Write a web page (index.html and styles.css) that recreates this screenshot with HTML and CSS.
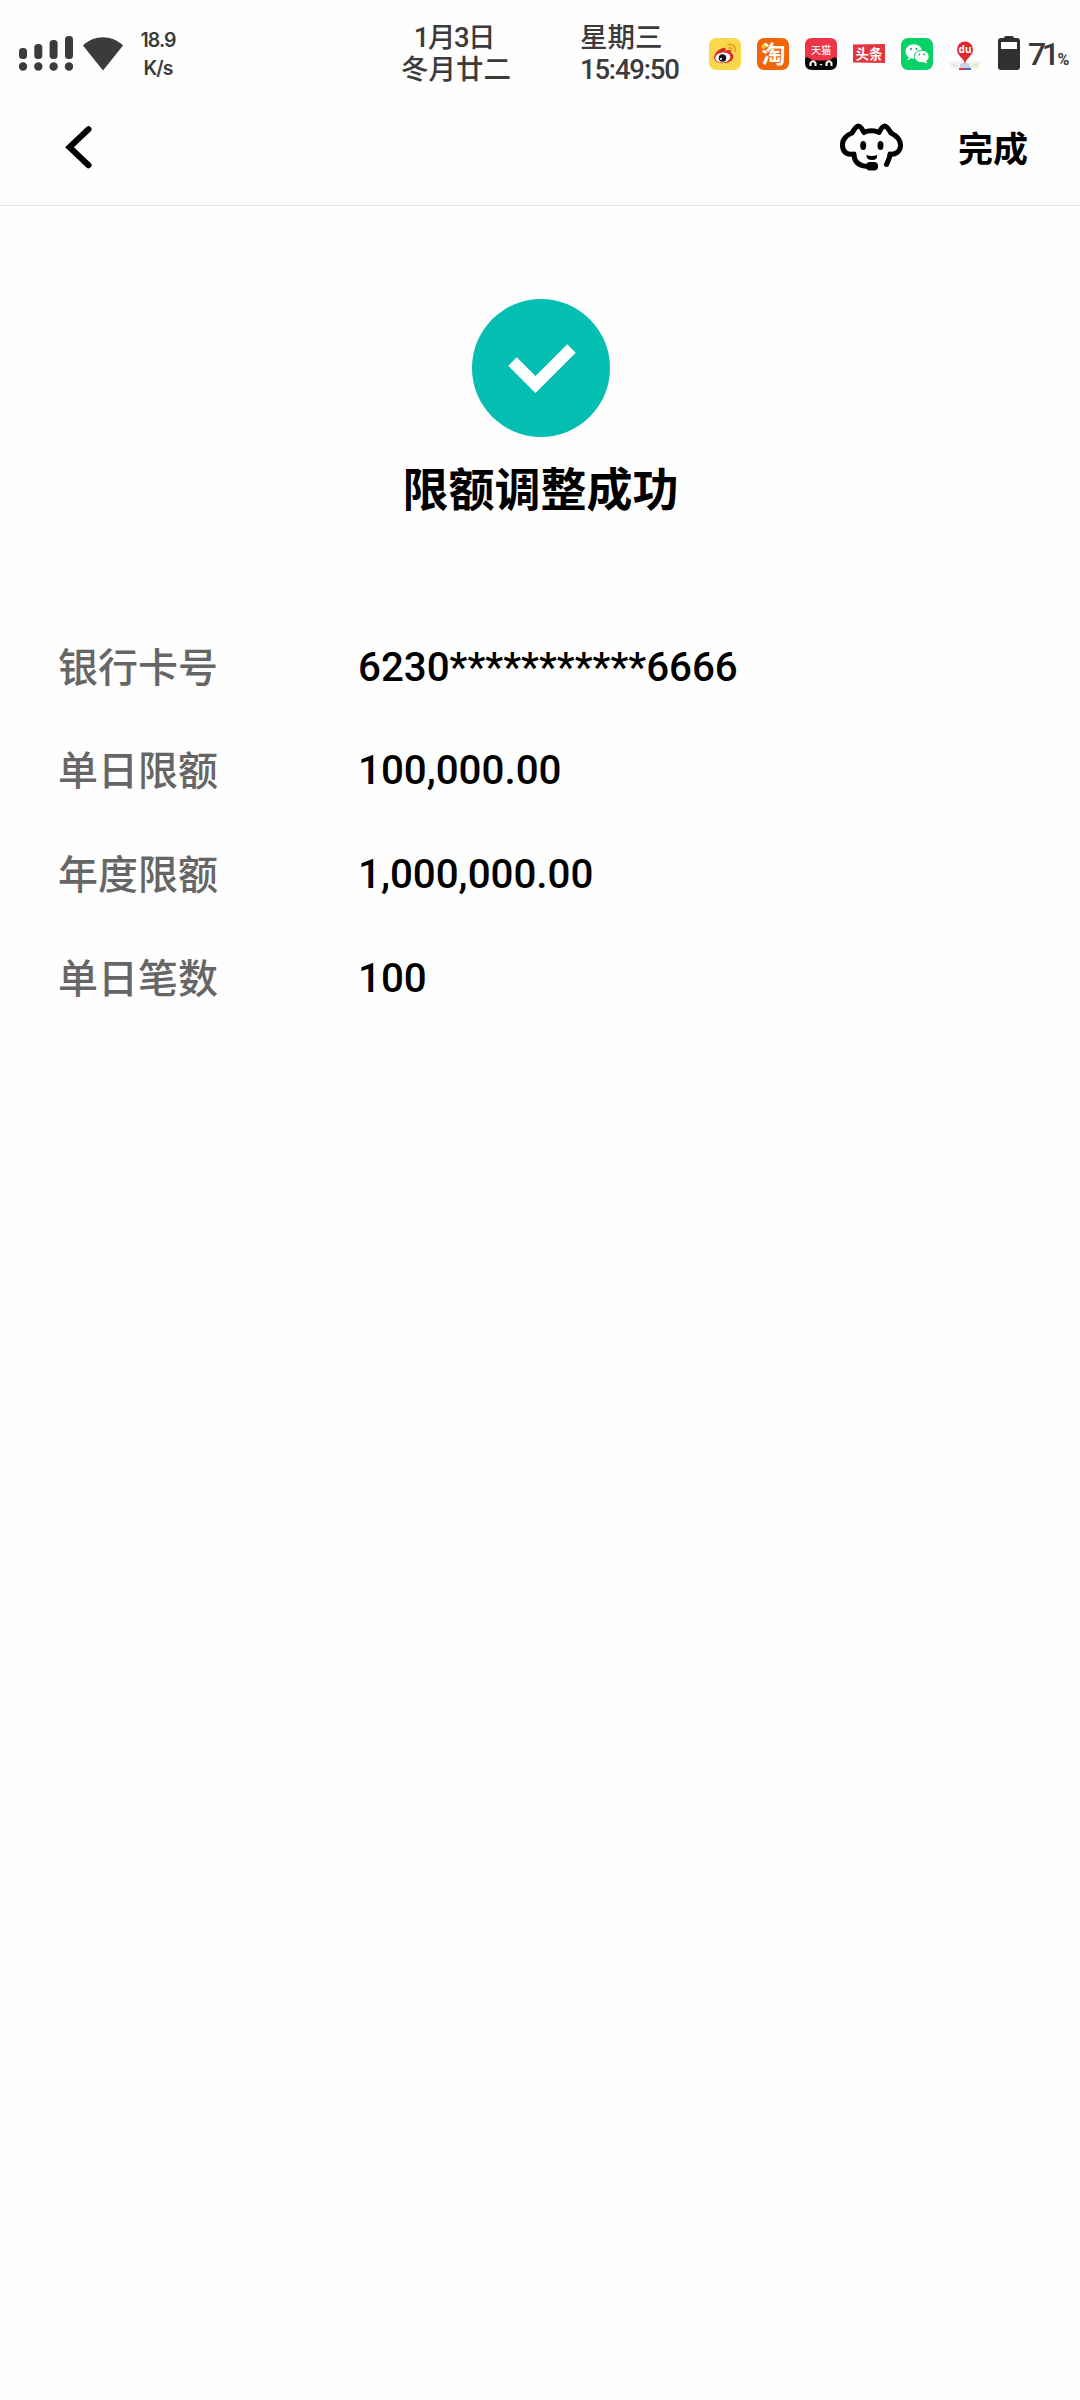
FILE: index.html
```html
<!DOCTYPE html>
<html lang="zh-CN">
<head>
<meta charset="utf-8">
<title>限额调整成功</title>
<link rel="stylesheet" href="styles.css">
</head>
<body>
<header class="status">
  <svg class="signal" width="54" height="36" viewBox="0 0 54 36">
    <rect x="0" y="12" width="8" height="11" rx="3.5"/><rect x="15.300" y="8" width="8" height="15" rx="3.500"/><rect x="30.600" y="4" width="8" height="19" rx="3.500"/><rect x="46" y="0" width="8" height="23" rx="3.500"/>
    <circle cx="4" cy="30.500" r="4.200"/><circle cx="19.300" cy="30.500" r="4.200"/><circle cx="34.600" cy="30.500" r="4.200"/><circle cx="50" cy="30.500" r="4.200"/>
  </svg>
  <svg class="wifi" width="42" height="36" viewBox="0 0 42 36"><path d="M1 9.500C12-1.500 30-1.500 41 9.500L21 34.500Z"/></svg>
  <div class="speed"><span>18.9</span><span>K/s</span></div>
  <div class="date"><span class="solar">1月3日</span><span>冬月廿二</span></div>
  <div class="clock"><span class="weekday">星期三</span><span class="time">15:49:50</span></div>
  <div class="apps">
    <svg width="32" height="32" viewBox="0 0 32 32">
      <rect width="32" height="32" rx="7" fill="#fbd84b"/>
      <path d="M5 20C5 15 10 11 14 10C17 9 17 11 16.500 13C20 11 23 12 22 15C25 16 25 19 23 22C20 26 6 27 5 20Z" fill="#d92a26"/>
      <ellipse cx="13.800" cy="19.500" rx="7.600" ry="5" fill="#fff" transform="rotate(-8 13.800 19.500)"/>
      <circle cx="13.500" cy="20" r="3.800" fill="#151515"/><circle cx="12" cy="21" r="1.100" fill="#fff"/>
      <path d="M19 6.500C24 5.500 27 9 26 13.500M19.500 10C22 9.500 23 11 22.500 13" fill="none" stroke="#e9a02b" stroke-width="1.700" stroke-linecap="round"/>
    </svg>
    <svg class="overflowing" width="32" height="32" viewBox="0 0 32 32">
      <rect width="32" height="32" rx="7" fill="#f16408"/>
      <text class="tao" x="16.500" y="25" text-anchor="middle">淘</text>
      <circle cx="6.500" cy="8.500" r="2.200" fill="#ffc21c"/>
    </svg>
    <svg width="32" height="32" viewBox="0 0 32 32">
      <path d="M7 0H25Q32 0 32 7V24H0V7Q0 0 7 0Z" fill="#ee3548"/>
      <text class="mao" x="16" y="15.500" text-anchor="middle">天猫</text>
      <path d="M0 21L2 19L8 22.500H24L30 19L32 21V25Q32 32 25 32H7Q0 32 0 25Z" fill="#080808"/>
      <path d="M5.500 28V25Q8 21.500 10.500 25V28M21.500 28V25Q24 21.500 26.500 25V28" fill="none" stroke="#fff" stroke-width="2"/><path d="M14.500 26H17.500L16 27.800Z" fill="#fff"/>
    </svg>
    <svg width="32" height="32" viewBox="0 0 32 32">
      <path d="M0 6.500L32 6V25L0 24.500Z" fill="#e5343d"/>
      <text class="tiao" x="16" y="20.500" text-anchor="middle">头条</text>
    </svg>
    <svg width="32" height="32" viewBox="0 0 32 32">
      <rect width="32" height="32" rx="7" fill="#07d267"/>
      <path d="M7 20L6.500 22.500L10 20.500Z" fill="#fff"/><ellipse cx="12.800" cy="13.500" rx="8.200" ry="7.300" fill="#fff"/>
      <ellipse cx="20.800" cy="18.500" rx="7.400" ry="6.300" fill="#fff" stroke="#07d267"/><path d="M22 24L26 25.500L25 22Z" fill="#fff"/>
      <g fill="#13a65a"><circle cx="10" cy="11" r="1.100"/><circle cx="15.500" cy="11" r="1.100"/><circle cx="18.300" cy="16.500" r=".9"/><circle cx="23.200" cy="16.500" r=".9"/></g>
    </svg>
    <svg width="32" height="32" viewBox="0 0 32 32">
      <path d="M0 24L11 23L10 29L3 31Z" fill="#edf3f2"/><path d="M21 23L32 24L29 31L22 30Z" fill="#f0f2dc"/><path d="M3 26L9 29M23 28L30 26" stroke="#cddfcf" fill="none"/>
      <path d="M12 25H20L22 30H10Z" fill="#c8d5e9"/><path d="M10 30H16V32H10Z" fill="#d83c48"/><path d="M16 30H22V32H16Z" fill="#496cb0"/>
      <path d="M16 26C15 20 8 18 8 11.500A8 8 0 0 1 24 11.500C24 18 17 20 16 26Z" fill="#df2730"/>
      <text class="du" x="16" y="15" text-anchor="middle">du</text>
    </svg>
  </div>
  <svg class="battery" width="22" height="34" viewBox="0 0 22 34"><path d="M6 2Q6 0 8 0H14Q16 0 16 2H19Q22 2 22 5V31Q22 34 19 34H3Q0 34 0 31V5Q0 2 3 2Z"/><rect x="3" y="6" width="16" height="7" fill="#fff"/></svg>
  <div class="percent">71<small>%</small></div>
</header>
<nav class="navbar">
  <svg class="back" width="28" height="44" viewBox="0 0 28 44"><path d="M24.500 4.200L5.500 22.200L24.500 40.200"/></svg>
  <svg class="service" width="64" height="50" viewBox="0 0 64 50">
    <path d="M46.500 41.500C48 38 50 35 50 31C55 32 60 29 60.500 23C61 16 55 12 51 10C49 7 48 4 45 3C42 3 41 6 39 9.500C35 7 28 7 24 9.500C22 6 21 3 18 3C15 4 14 7 12 10C7 12 2 16 2.500 23C3 30 8 32 14 31C14 39 19 43 28 43.500"/>
    <g class="solid"><ellipse cx="23.200" cy="22.500" rx="3" ry="4.500"/><ellipse cx="40.500" cy="22.500" rx="3" ry="4.500"/><rect x="26" y="39" width="12" height="8.500" rx="4"/><path d="M26.500 32Q32 34 37 32Q38 37 32 37Q26 37 26.500 32Z"/></g>
  </svg>
  <button class="done">完成</button>
</nav>
<main>
  <section class="result">
    <svg width="138" height="138" viewBox="0 0 138 138"><circle cx="69" cy="69" r="69" fill="#04bfb1"/><path d="M40.500 62.500L63.500 85.500L99.500 49.500" fill="none" stroke="#fff" stroke-width="12"/></svg>
    <h1>限额调整成功</h1>
  </section>
  <dl class="details">
    <dt>银行卡号</dt><dd>6230***********6666</dd>
    <dt>单日限额</dt><dd>100,000.00</dd>
    <dt>年度限额</dt><dd>1,000,000.00</dd>
    <dt>单日笔数</dt><dd>100</dd>
  </dl>
</main>
</body>
</html>
```
FILE: styles.css
```css
* { box-sizing: border-box; }
body { margin: 0; min-height: 2400px; background: #fefefe; color: #000; font-family: Roboto, "Noto Sans CJK SC", sans-serif; }
svg { display: block; flex: none; }
.status { display: flex; height: 106px; color: #3b3b3b; fill: #3b3b3b; white-space: nowrap; }
.signal { margin: 36px 0 0 19px; }
.wifi { margin: 36px 0 0 9px; }
.speed { width: 42px; margin: 26px 0 0 13px; display: flex; flex-direction: column; align-items: center; font: 600 19.5px/28px Inter, sans-serif; letter-spacing: -.9px; }
.date { width: 130px; margin: 22px 0 0 212px; display: flex; flex-direction: column; align-items: center; font-size: 27.5px; font-weight: 500; line-height: 32px; }
.solar { margin-right: 4px; letter-spacing: -1.5px; }
.clock { width: 110px; margin: 22px 0 0 59px; display: flex; flex-direction: column; font-size: 27.5px; font-weight: 500; line-height: 32px; }
.time { letter-spacing: -1.2px; }
.apps { display: flex; gap: 16px; margin: 38px 0 0 19px; height: 32px; }
.apps text { font-family: "Noto Sans CJK SC", sans-serif; font-weight: 700; fill: #fff; }
.overflowing { overflow: visible; }
.apps .tao { font-size: 24px; }
.apps .mao { font-size: 10px; font-weight: 500; }
.apps .tiao { font-size: 13.500px; }
.apps .du { font-family: "Noto Sans", sans-serif; font-size: 10px; }
.battery { margin: 36px 0 0 17px; fill: #303030; }
.percent { margin: 34px 0 0 8px; font-size: 32px; font-weight: 500; line-height: 40px; letter-spacing: -4.500px; }
.percent small { font-size: 16px; font-weight: 700; letter-spacing: 0; margin-left: 2px; }
.navbar { display: flex; align-items: flex-start; height: 100px; border-bottom: 1px solid #e2e2e2; }
.back { margin: 19px 0 0 64px; fill: none; stroke: #000; stroke-width: 6; stroke-linecap: round; }
.service { margin: 17px 0 0 748px; fill: none; stroke: #000; stroke-width: 5; stroke-linecap: round; stroke-linejoin: round; }
.solid { fill: #000; stroke: none; }
.done { margin: 19px 0 0 54px; padding: 0; border: 0; background: none; color: #000; font: 700 35px/44px "Noto Sans CJK SC", sans-serif; }
.result { display: flex; flex-direction: column; align-items: center; padding: 93px 0 0 1px; }
h1 { margin: 15px 0 0; font: 700 46px/68px "Noto Sans CJK SC", sans-serif; }
.details { display: grid; grid-template-columns: 300px 1fr; grid-auto-rows: 103.600px; align-items: center; margin: 96px 58px 0; font-size: 40.300px; line-height: 60px; }
dt { padding-bottom: 6px; color: #666; font-family: "Noto Sans CJK SC", sans-serif; font-size: 40px; font-weight: 500; }
dd { margin: 0; font-weight: 500; }
```
